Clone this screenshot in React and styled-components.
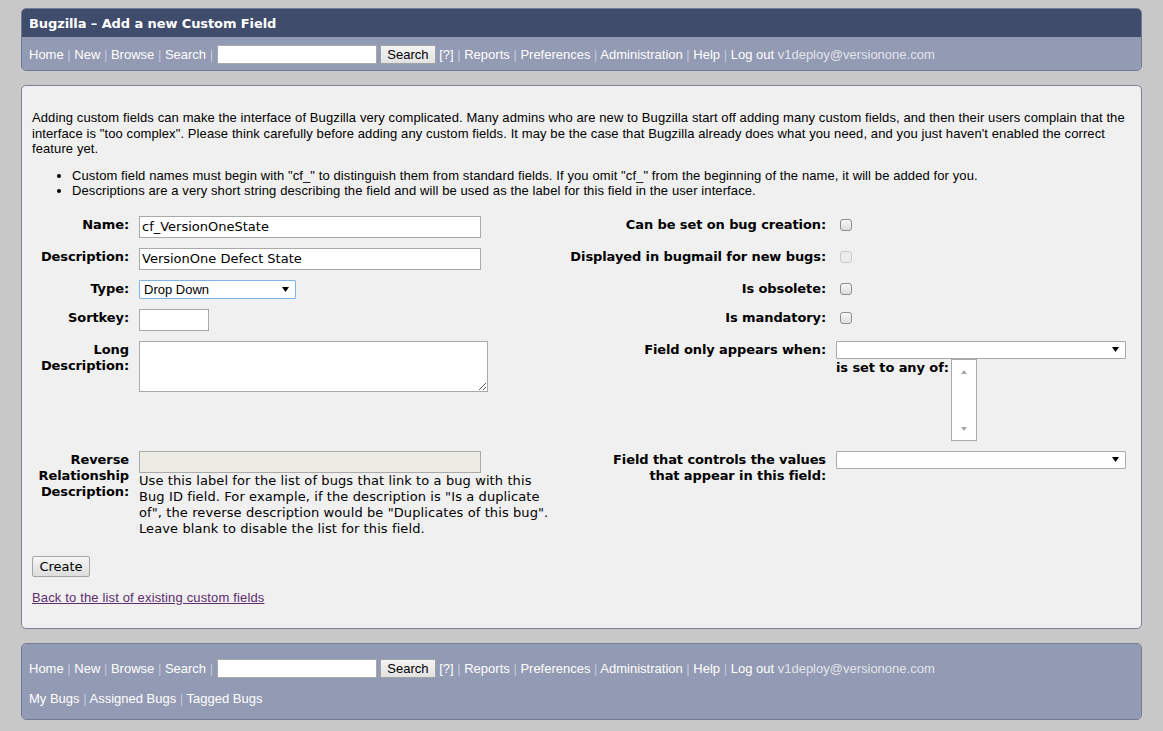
import React from 'react';
import styled, { createGlobalStyle } from 'styled-components';

const GlobalStyle = createGlobalStyle`
  body {
    margin: 0;
    background: #c8c8c8;
    font-family: "Liberation Sans", Arial, sans-serif;
    font-size: 13px;
    color: #000;
  }
`;

const Page = styled.div`
  padding: 8px 21px 12px;
  display: flex;
  flex-direction: column;
  gap: 14px;
`;

const Header = styled.header`
  border: 1px solid #737a93;
  border-radius: 5px;
  overflow: hidden;
`;

const TitleBar = styled.div`
  background: #404c6b;
  color: #fff;
  font: bold 13px "DejaVu Sans", Verdana, sans-serif;
  letter-spacing: -0.1px;
  height: 28px;
  padding: 0 7px;
  display: flex;
  align-items: center;
`;

const NavBar = styled.div`
  background: #939ab3;
  padding: ${(p) => p.$padding || '8px 7px 6px'};
  display: flex;
  flex-direction: column;
  gap: 11px;
`;

const FooterBox = styled.footer`
  border: 1px solid #737a93;
  border-radius: 5px;
  overflow: hidden;
`;

const NavLine = styled.div`
  line-height: 19px;
  white-space: nowrap;
  color: #fff;
`;

const NavLink = styled.a`
  color: #fff;
  text-decoration: none;
`;

const Sep = styled.span`
  color: #c3c8d8;
`;

const UserName = styled.span`
  color: #e2e4ec;
`;

const QuickSearch = styled.input`
  box-sizing: border-box;
  width: 160px;
  height: 19px;
  border: 1px solid #a9a9a9;
  background: #fff;
  vertical-align: top;
  margin: 0;
  padding: 0 2px;
`;

const NavButton = styled.button`
  box-sizing: border-box;
  height: 19px;
  padding: 0 6px;
  margin: 0;
  font: 13px "Liberation Sans", Arial, sans-serif;
  color: #000;
  background: linear-gradient(#f4f4f4, #e2e2e2);
  border: 1px solid #a3a3a3;
  border-radius: 1px;
  vertical-align: top;
  line-height: 17px;
`;

const Main = styled.main`
  background: #f0f0f0;
  border: 1px solid #7c8193;
  border-radius: 5px;
  padding: 11px 10px 23px;
`;

const Intro = styled.p`
  margin: 13px 0 0;
  line-height: 15.5px;
  letter-spacing: 0.1px;
`;

const Notes = styled.ul`
  margin: 11px 0 0;
  padding-left: 40px;
  line-height: 15px;
  letter-spacing: 0.1px;
`;

const FormGrid = styled.div`
  margin-top: 18px;
  display: grid;
  grid-template-columns: 97px 421px 256px 1fr;
  column-gap: 10px;
  row-gap: 10px;
  align-items: start;
`;

const Label = styled.label`
  padding-top: 1px;
  font: bold 13px/16px "DejaVu Sans", Verdana, sans-serif;
  letter-spacing: -0.1px;
  text-align: right;
  white-space: ${(p) => (p.$wrap ? 'normal' : 'nowrap')};
`;

const TextInput = styled.input`
  box-sizing: border-box;
  width: ${(p) => p.$width}px;
  height: 22px;
  margin: 0;
  padding: 0 2px;
  border: 1px solid #a9a9a9;
  background: ${(p) => (p.disabled ? '#ebebe4' : '#fff')};
  font: 13px "DejaVu Sans", Verdana, sans-serif;
  color: #000;
`;

const TextArea = styled.textarea`
  box-sizing: border-box;
  width: 349px;
  height: 51px;
  margin: 0;
  padding: 2px;
  border: 1px solid #a9a9a9;
  background: #fff;
  resize: both;
  font: 13px "DejaVu Sans", Verdana, sans-serif;
`;

const SelectBox = styled.div`
  box-sizing: border-box;
  width: ${(p) => p.$width}px;
  height: ${(p) => p.$height}px;
  border: 1px solid ${(p) => (p.$focused ? '#7eb4ea' : '#a9a9a9')};
  border-radius: 1px;
  background: #fff;
  display: flex;
  align-items: center;
  justify-content: space-between;
  padding: 0 6px 0 4px;
  font: 13px "Liberation Sans", Arial, sans-serif;
`;

const Arrow = styled.svg`
  width: ${(p) => p.$w || 7}px;
  height: ${(p) => p.$h || 5}px;
  flex: none;
`;

const Stack = styled.div`
  display: flex;
  flex-direction: column;
`;

const HelpText = styled.div`
  font: 13px/16px "DejaVu Sans", Verdana, sans-serif;
  letter-spacing: 0.1px;
`;

const Check = styled.span`
  display: block;
  box-sizing: border-box;
  width: 12px;
  height: 12px;
  margin: 3px 0 0 4px;
  border-radius: 3px;
  border: 1px solid ${(p) => (p.$disabled ? '#cacaca' : '#8e8e8e')};
  background: ${(p) =>
    p.$disabled ? '#ececec' : 'linear-gradient(#f7f7f7, #dedede)'};
`;

const ValueRow = styled.div`
  display: flex;
  align-items: flex-start;
  gap: 2px;
`;

const InlineLabel = styled.span`
  font: bold 13px/16px "DejaVu Sans", Verdana, sans-serif;
  letter-spacing: -0.1px;
  padding-top: 1px;
`;

const ListBox = styled.div`
  box-sizing: border-box;
  width: 26px;
  height: 82px;
  border: 1px solid #a9a9a9;
  background: #fff;
  display: flex;
  flex-direction: column;
  justify-content: space-between;
  align-items: center;
  padding: 10px 0 9px;
`;

const Actions = styled.div`
  margin-top: 19px;
`;

const CreateButton = styled.button`
  box-sizing: border-box;
  width: 58px;
  height: 21px;
  margin: 0;
  padding: 0;
  font: 13px "DejaVu Sans", Verdana, sans-serif;
  color: #000;
  background: linear-gradient(#f6f6f6, #dddddd);
  border: 1px solid #a5a5a5;
  border-radius: 2px;
`;

const BackLink = styled.a`
  display: inline-block;
  margin-top: 13px;
  color: #5e2d6f;
  text-decoration: underline;
  line-height: 15px;
  letter-spacing: 0.15px;
`;

const Triangle = ({ up, color = '#000', w, h }) => (
  <Arrow viewBox="0 0 7 5" $w={w} $h={h}>
    <path d={up ? 'M0 5h7L3.5 0z' : 'M0 0h7L3.5 5z'} fill={color} />
  </Arrow>
);

const Select = ({ width, height, focused, children }) => (
  <SelectBox $width={width} $height={height} $focused={focused}>
    <span>{children}</span>
    <Triangle />
  </SelectBox>
);

const navItems = ['Home', 'New', 'Browse', 'Search'];
const navTail = ['Reports', 'Preferences', 'Administration', 'Help'];

const NavMain = () => (
  <NavLine>
    {navItems.map((item) => (
      <React.Fragment key={item}>
        <NavLink href="#">{item}</NavLink>
        <Sep> | </Sep>
      </React.Fragment>
    ))}
    <QuickSearch type="text" /> <NavButton>Search</NavButton>{' '}
    <NavLink href="#">[?]</NavLink>
    {navTail.map((item) => (
      <React.Fragment key={item}>
        <Sep> | </Sep>
        <NavLink href="#">{item}</NavLink>
      </React.Fragment>
    ))}
    <Sep> | </Sep>
    <NavLink href="#">Log out</NavLink> <UserName>v1deploy@versionone.com</UserName>
  </NavLine>
);

const savedSearches = ['My Bugs', 'Assigned Bugs', 'Tagged Bugs'];

export default function App() {
  return (
    <>
      <GlobalStyle />
      <Page>
        <Header>
          <TitleBar>Bugzilla – Add a new Custom Field</TitleBar>
          <NavBar>
            <NavMain />
          </NavBar>
        </Header>

        <Main>
          <Intro>
            Adding custom fields can make the interface of Bugzilla very complicated. Many
            admins who are new to Bugzilla start off adding many custom fields, and then their
            users complain that the interface is "too complex". Please think carefully before
            adding any custom fields. It may be the case that Bugzilla already does what you
            need, and you just haven't enabled the correct feature yet.
          </Intro>
          <Notes>
            <li>
              Custom field names must begin with "cf_" to distinguish them from standard
              fields. If you omit "cf_" from the beginning of the name, it will be added for
              you.
            </li>
            <li>
              Descriptions are a very short string describing the field and will be used as
              the label for this field in the user interface.
            </li>
          </Notes>

          <FormGrid>
            <Label>Name:</Label>
            <TextInput $width={342} defaultValue="cf_VersionOneState" />
            <Label>Can be set on bug creation:</Label>
            <Check />

            <Label>Description:</Label>
            <TextInput $width={342} defaultValue="VersionOne Defect State" />
            <Label>Displayed in bugmail for new bugs:</Label>
            <Check $disabled />

            <Label>Type:</Label>
            <Select width={157} height={19} focused>
              Drop Down
            </Select>
            <Label>Is obsolete:</Label>
            <Check />

            <Label>Sortkey:</Label>
            <TextInput $width={70} />
            <Label>Is mandatory:</Label>
            <Check />

            <Label $wrap>Long Description:</Label>
            <TextArea />
            <Label>Field only appears when:</Label>
            <Stack>
              <Select width={290} height={18} />
              <ValueRow>
                <InlineLabel>is set to any of:</InlineLabel>
                <ListBox>
                  <Triangle up color="#a3a3a3" w={6} h={4} />
                  <Triangle color="#a3a3a3" w={6} h={4} />
                </ListBox>
              </ValueRow>
            </Stack>

            <Label $wrap>Reverse Relationship Description:</Label>
            <Stack>
              <TextInput $width={342} disabled />
              <HelpText>
                Use this label for the list of bugs that link to a bug with this Bug ID field.
                For example, if the description is "Is a duplicate of", the reverse description
                would be "Duplicates of this bug". Leave blank to disable the list for this
                field.
              </HelpText>
            </Stack>
            <Label>
              Field that controls the values
              <br />
              that appear in this field:
            </Label>
            <Select width={290} height={18} />
          </FormGrid>

          <Actions>
            <CreateButton>Create</CreateButton>
          </Actions>
          <BackLink href="#">Back to the list of existing custom fields</BackLink>
        </Main>

        <FooterBox>
          <NavBar $padding="15px 7px 11px">
            <NavMain />
            <NavLine>
              {savedSearches.map((item, i) => (
                <React.Fragment key={item}>
                  {i > 0 && <Sep> | </Sep>}
                  <NavLink href="#">{item}</NavLink>
                </React.Fragment>
              ))}
            </NavLine>
          </NavBar>
        </FooterBox>
      </Page>
    </>
  );
}
